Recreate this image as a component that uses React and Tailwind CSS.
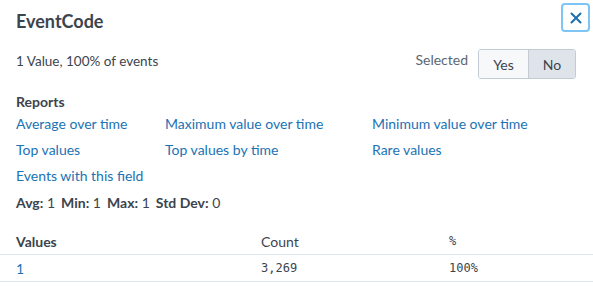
import React from "react";

const link = "text-[#1b72b4] text-[14px] leading-[18px] whitespace-nowrap";

export default function App() {
  return (
    <div className="w-[593px] h-[294px] bg-white overflow-hidden text-[#3c444d]" style={{ fontFamily: "Lato, 'Open Sans', sans-serif" }}>
      <div className="flex items-start justify-between pl-4 pr-[3px] pt-[3px]">
        <div className="pt-[6px] text-[18px] leading-[24px] font-bold text-[#3c444d]">EventCode</div>
        <button className="w-[29px] h-[29px] rounded-[4px] border-2 border-[#7ec5f3] bg-white flex items-center justify-center">
          <svg width="12" height="12" viewBox="0 0 12 12">
            <path d="M1.5 1.5 L10.5 10.5 M10.5 1.5 L1.5 10.5" stroke="#1b6fae" strokeWidth="2" strokeLinecap="round" />
          </svg>
        </button>
      </div>
      <div className="flex items-center justify-between pl-4 pr-[17px] mt-[16px]">
        <div className="text-[13.5px] leading-[18px] text-[#3c444d] -mt-[6px]">1 Value, 100% of events</div>
        <div className="flex items-center">
          <span className="text-[14px] text-[#5c6773] mr-[10px] -mt-[10px]">Selected</span>
          <div className="flex h-[30px] border border-[#c3cbd4] rounded-[3px] overflow-hidden text-[14px] text-[#3c444d]">
            <div className="w-[50px] flex items-center justify-center bg-[#f7f8fa] border-r border-[#c3cbd4]">Yes</div>
            <div className="w-[46px] flex items-center justify-center bg-[#dfe3ea]">No</div>
          </div>
        </div>
      </div>
      <div className="pl-4 mt-[14px]">
        <div className="text-[14px] leading-[18px] font-bold">Reports</div>
        <div className="grid grid-cols-[149px_207px_auto]">
          <div className="h-[26px] flex items-center"><span className={link}>Average over time</span></div>
          <div className="h-[26px] flex items-center"><span className={link}>Maximum value over time</span></div>
          <div className="h-[26px] flex items-center"><span className={link}>Minimum value over time</span></div>
          <div className="h-[26px] flex items-center"><span className={link}>Top values</span></div>
          <div className="h-[26px] flex items-center"><span className={link}>Top values by time</span></div>
          <div className="h-[26px] flex items-center"><span className={link}>Rare values</span></div>
          <div className="h-[26px] flex items-center"><span className={link}>Events with this field</span></div>
        </div>
        <div className="h-[26px] flex items-center text-[14px] gap-[6px]">
          <span><b>Avg:</b> 1</span>
          <span><b>Min:</b> 1</span>
          <span><b>Max:</b> 1</span>
          <span><b>Std Dev:</b> 0</span>
        </div>
      </div>
      <div className="mt-[13px]">
        <div className="flex h-[27px] items-center border-b border-[#e1e6eb] text-[14px]">
          <div className="w-[261px] pl-4 font-bold">Values</div>
          <div className="w-[188px]">Count</div>
          <div style={{ fontFamily: "'DejaVu Sans Mono', monospace" }} className="text-[12px]">%</div>
        </div>
        <div className="flex h-[27px] items-center border-b border-[#e1e6eb] text-[12px]" style={{ fontFamily: "'DejaVu Sans Mono', monospace" }}>
          <div className="w-[261px] pl-4 text-[#1b72b4]" style={{ fontFamily: "Lato, sans-serif" }}><span className="text-[14px]">1</span></div>
          <div className="w-[188px]">3,269</div>
          <div>100%</div>
        </div>
      </div>
    </div>
  );
}
